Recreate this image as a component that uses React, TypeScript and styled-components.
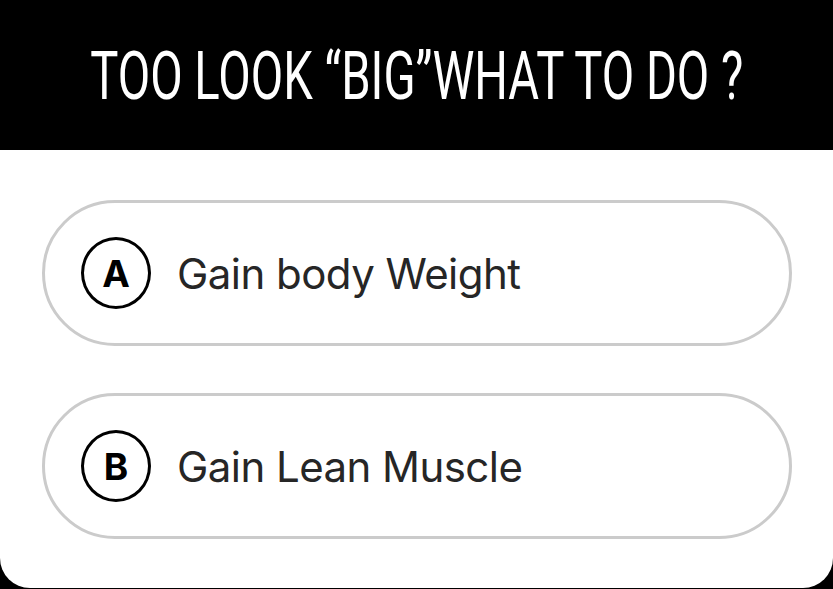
import React from "react";
import styled, { createGlobalStyle } from "styled-components";

const Global = createGlobalStyle`
  html, body { margin: 0; padding: 0; background: #000; }
  body { width: 833px; height: 589px; overflow: hidden; }
`;

const Card = styled.div`
  width: 833px;
  height: 588px;
  background: #fff;
  border-radius: 0 0 30px 30px;
  overflow: hidden;
  display: flex;
  flex-direction: column;
`;

const Header = styled.div`
  height: 150px;
  background: #000;
  display: flex;
  align-items: center;
  justify-content: center;
  flex-shrink: 0;
`;

const Title = styled.h1`
  margin: 0;
  color: #fff;
  font-family: Roboto, "Liberation Sans", sans-serif;
  font-weight: 400;
  font-size: 66px;
  line-height: 1;
  white-space: nowrap;
  transform: scaleX(0.715);
  padding-top: 4px;
`;

const Options = styled.div`
  display: flex;
  flex-direction: column;
  gap: 47px;
  padding: 50px 41px 0 42px;
`;

const Pill = styled.div`
  height: 146px;
  box-sizing: border-box;
  border: 3px solid #cbcbcb;
  border-radius: 73px;
  display: flex;
  align-items: center;
  padding-left: 36px;
  gap: 26px;
`;

const Letter = styled.div`
  width: 70px;
  height: 72px;
  box-sizing: border-box;
  border: 3px solid #000;
  border-radius: 50%;
  display: flex;
  align-items: center;
  justify-content: center;
  font-family: Inter, "Liberation Sans", sans-serif;
  font-weight: 700;
  font-size: 37px;
  color: #000;
  flex-shrink: 0;
`;

const Label = styled.span`
  font-family: Inter, "Liberation Sans", sans-serif;
  font-weight: 400;
  font-size: 42px;
  color: #262626;
  letter-spacing: -0.55px;
  white-space: nowrap;
`;

const options = [
  { key: "A", text: "Gain body Weight" },
  { key: "B", text: "Gain Lean Muscle" },
];

export default function App() {
  return (
    <>
      <Global />
      <Card>
        <Header>
          <Title>TOO LOOK “BIG”WHAT TO DO ?</Title>
        </Header>
        <Options>
          {options.map((o) => (
            <Pill key={o.key}>
              <Letter>{o.key}</Letter>
              <Label>{o.text}</Label>
            </Pill>
          ))}
        </Options>
      </Card>
    </>
  );
}
